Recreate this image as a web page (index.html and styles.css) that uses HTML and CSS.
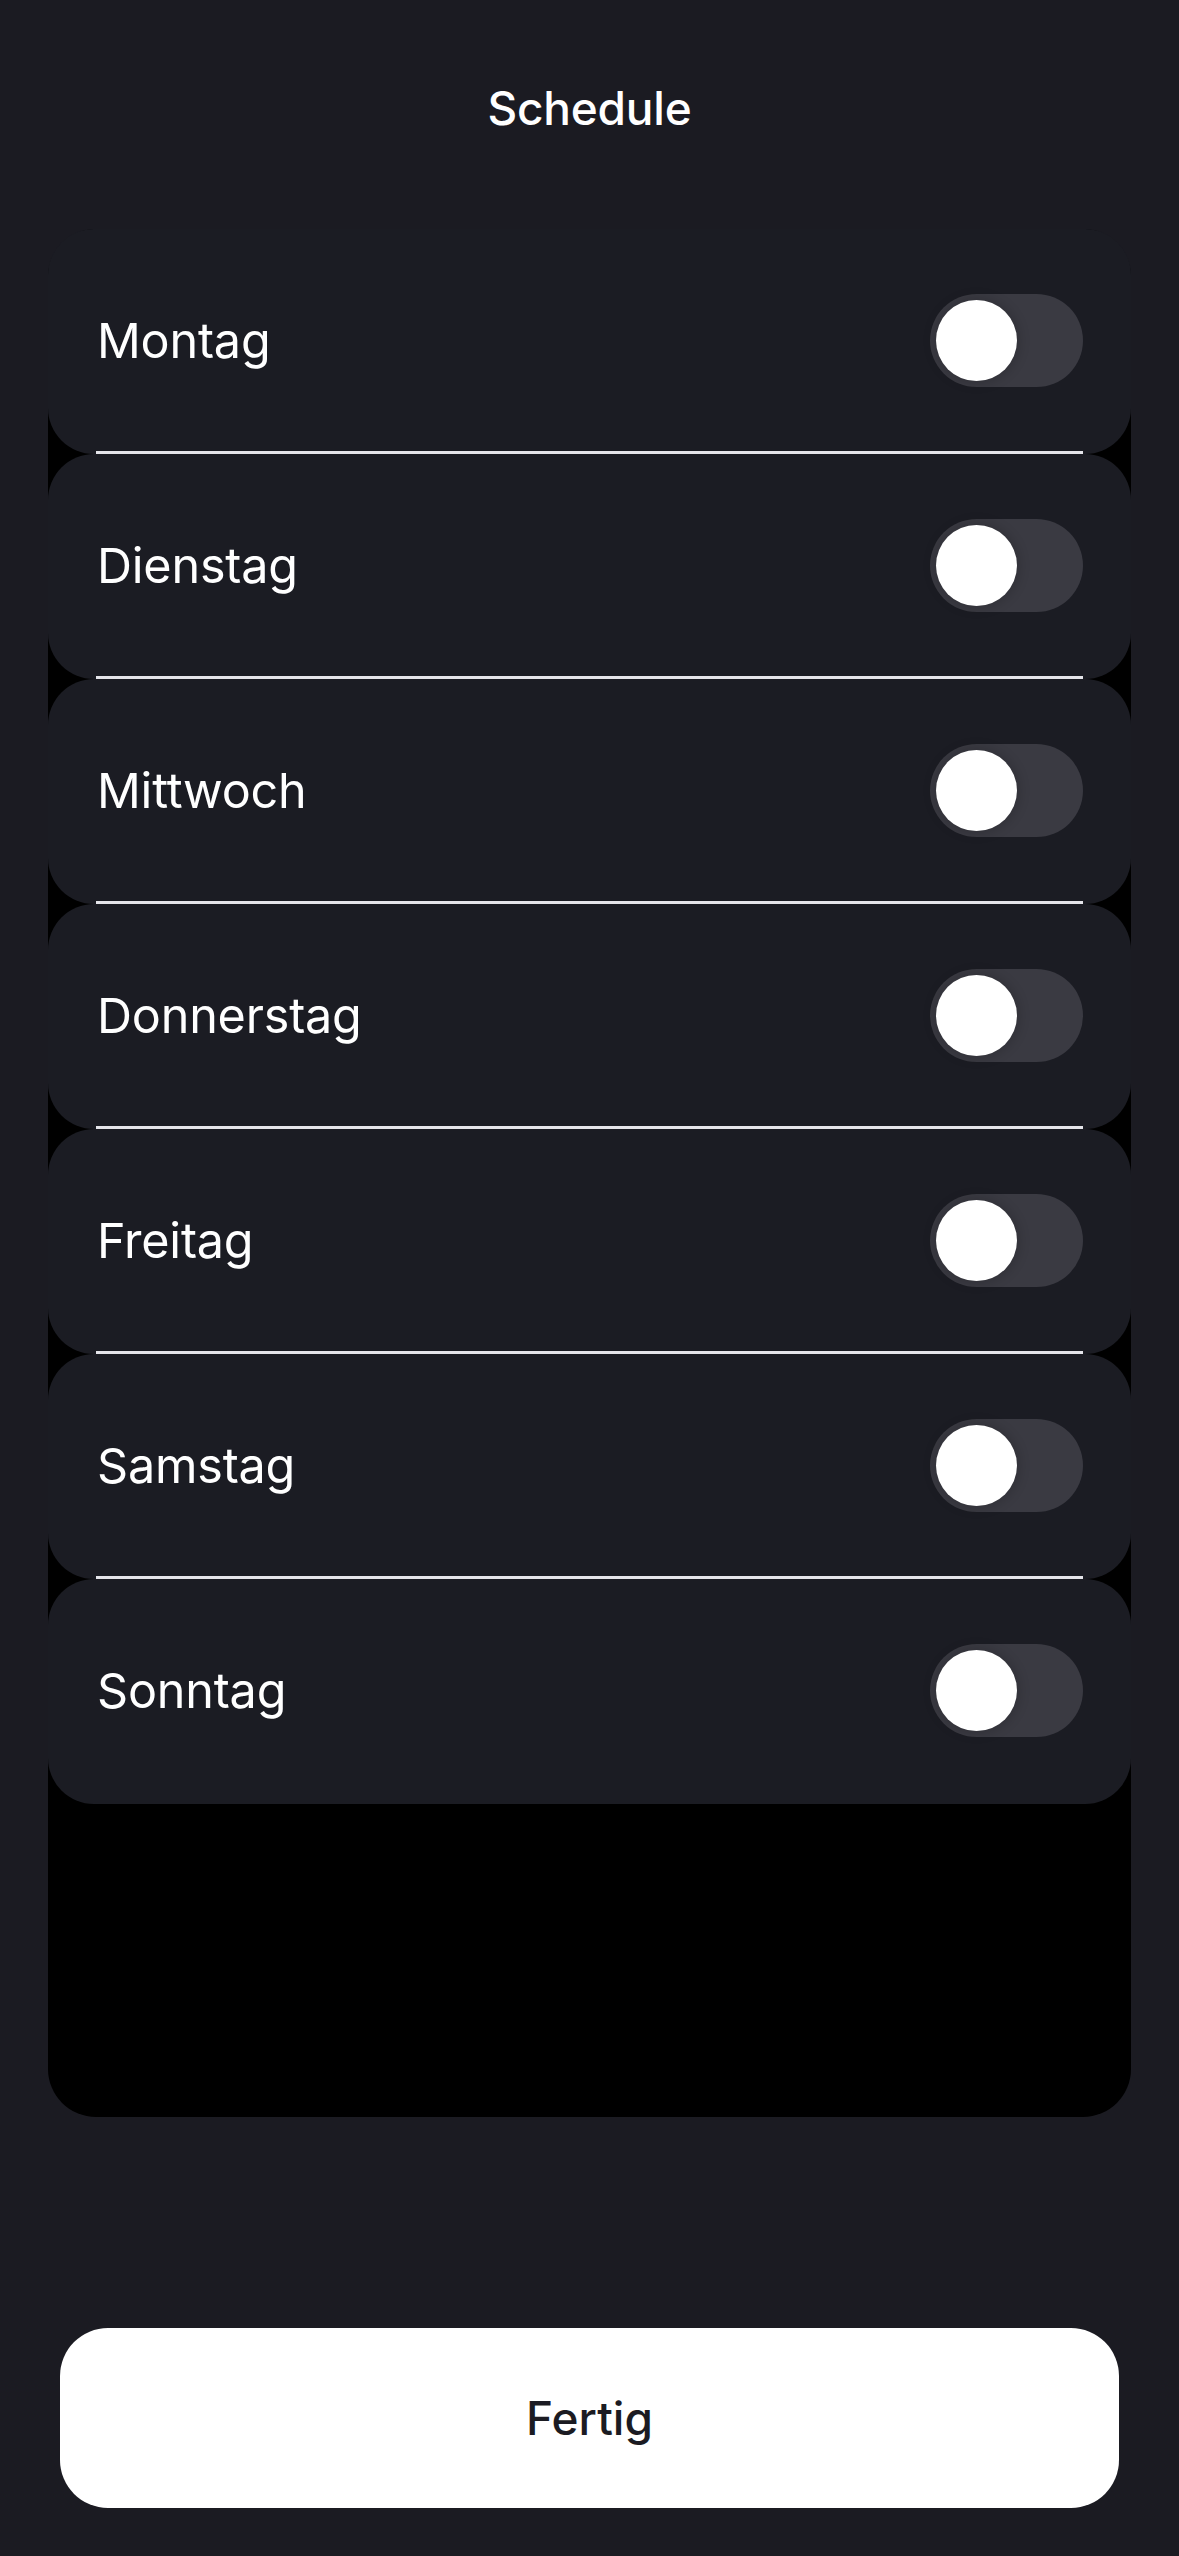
FILE: index.html
```html
<!DOCTYPE html>
<html lang="de">
<head>
<meta charset="utf-8">
<title>Schedule</title>
<link rel="stylesheet" href="styles.css">
</head>
<body>
<div class="screen">
  <header class="header"><h1 class="title">Schedule</h1></header>
  <div class="list">
    <div class="row"><div class="row-body"><span class="label">Montag</span><span class="toggle"><span class="knob"></span></span></div><div class="sep"></div></div>
    <div class="row"><div class="row-body"><span class="label">Dienstag</span><span class="toggle"><span class="knob"></span></span></div><div class="sep"></div></div>
    <div class="row"><div class="row-body"><span class="label">Mittwoch</span><span class="toggle"><span class="knob"></span></span></div><div class="sep"></div></div>
    <div class="row"><div class="row-body"><span class="label">Donnerstag</span><span class="toggle"><span class="knob"></span></span></div><div class="sep"></div></div>
    <div class="row"><div class="row-body"><span class="label">Freitag</span><span class="toggle"><span class="knob"></span></span></div><div class="sep"></div></div>
    <div class="row"><div class="row-body"><span class="label">Samstag</span><span class="toggle"><span class="knob"></span></span></div><div class="sep"></div></div>
    <div class="row last"><div class="row-body"><span class="label">Sonntag</span><span class="toggle"><span class="knob"></span></span></div></div>
  </div>
  <div class="spacer"></div>
  <button class="done">Fertig</button>
</div>
</body>
</html>
```

FILE: styles.css
```css
* { box-sizing: border-box; }
html, body {
  margin: 0;
  padding: 0;
  background: #1b1b22;
}
body {
  font-family: Inter, "Noto Sans", sans-serif;
  color: #ffffff;
}
.screen {
  width: 1179px;
  height: 2556px;
  display: flex;
  flex-direction: column;
}
.header {
  height: 216px;
  display: flex;
  align-items: center;
  justify-content: center;
}
.title {
  margin: 0;
  font-size: 46px;
  font-weight: 500;
  line-height: 52px;
  letter-spacing: -0.2px;
}
.list {
  margin: 13px 48px 0;
  height: 1888px;
  background: #000000;
  border-radius: 48px;
  display: flex;
  flex-direction: column;
}
.row {
  height: 225px;
  background: #1b1c23;
  border-radius: 46px;
  display: flex;
  flex-direction: column;
}
.row-body {
  flex: 1;
  display: flex;
  align-items: center;
  justify-content: space-between;
  padding: 0 48px;
}
.row.last .row-body { padding-bottom: 3px; }
.label {
  font-size: 48.5px;
  font-weight: 400;
  letter-spacing: -0.2px;
  padding-left: 1px;
}
.sep {
  height: 3px;
  margin: 0 48px;
  background: #e5e5ea;
}
.toggle {
  width: 153px;
  height: 93px;
  border-radius: 47px;
  background: #3a3a42;
  display: flex;
  align-items: center;
  padding-left: 6px;
}
.knob {
  width: 81px;
  height: 81px;
  border-radius: 50%;
  background: #ffffff;
  box-shadow: 0 0 12px 2px rgba(0, 0, 0, 0.18);
}
.spacer { flex: 1; }
.done {
  margin: 0 60px 48px;
  height: 180px;
  border: none;
  border-radius: 48px;
  background: #ffffff;
  color: #1b1b22;
  font-family: Inter, "Noto Sans", sans-serif;
  font-size: 46px;
  font-weight: 500;
}
```
